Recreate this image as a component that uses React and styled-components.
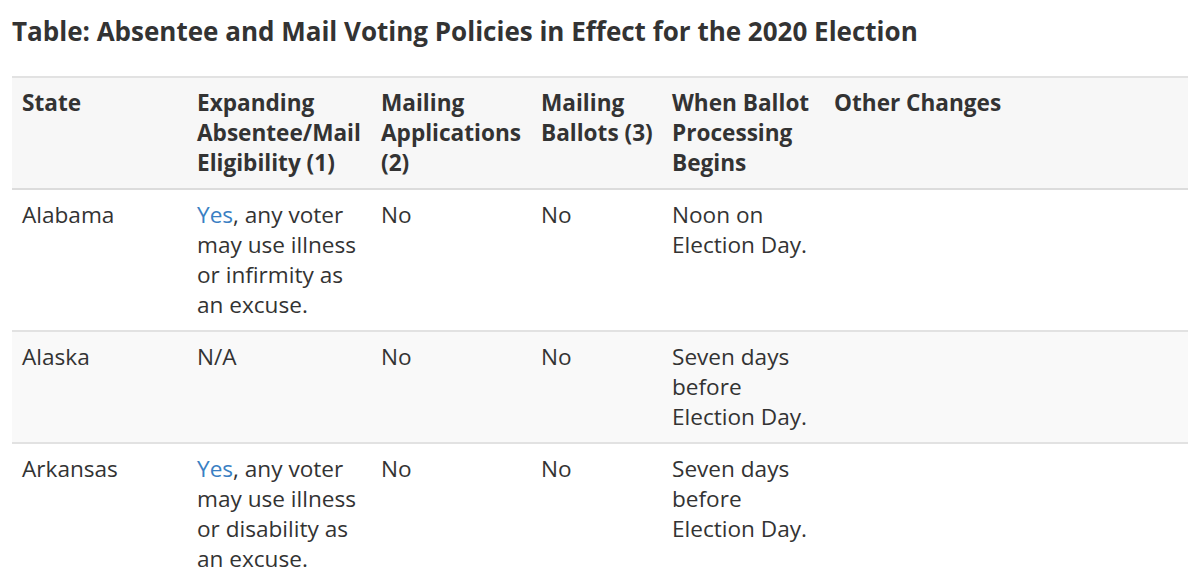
import React from "react";
import styled, { createGlobalStyle } from "styled-components";

const GlobalStyle = createGlobalStyle`
  html, body {
    margin: 0;
    padding: 0;
    background: #fff;
  }
  body {
    font-family: "Open Sans", "Liberation Sans", sans-serif;
    color: #333;
  }
`;

const Page = styled.div`
  padding: 14px 12px 0 12px;
  width: 1176px;
`;

const Title = styled.h2`
  font-size: 26px;
  font-weight: 700;
  line-height: 34px;
  margin: 0 0 28px 0;
  color: #333;
`;

const Table = styled.table`
  width: 1176px;
  border-collapse: collapse;
  table-layout: fixed;
  font-size: 22.6px;
  line-height: 30px;
`;

const HeadRow = styled.tr`
  background: #f7f7f7;
  border-top: 2px solid #e2e2e2;
  border-bottom: 2px solid #dcdcdc;
`;

const Row = styled.tr`
  background: ${(p) => (p.$striped ? "#f9f9f9" : "#fff")};
  border-bottom: 2px solid #e2e2e2;
`;

const Th = styled.th`
  box-sizing: border-box;
  text-align: left;
  vertical-align: top;
  font-weight: 700;
  padding: 10px 4px 10px 10px;
  width: ${(p) => p.$w}px;
  color: #333;
`;

const Td = styled.td`
  box-sizing: border-box;
  vertical-align: top;
  padding: 10px 6px 10px 10px;
  color: #333;
`;

const Link = styled.span`
  color: #3a7fc3;
`;

const cols = [
  { w: 175, label: "State" },
  { w: 184, label: "Expanding Absentee/Mail Eligibility (1)" },
  { w: 160, label: "Mailing Applications (2)" },
  { w: 131, label: "Mailing Ballots (3)" },
  { w: 162, label: "When Ballot Processing Begins" },
  { w: 364, label: "Other Changes" },
];

const rows = [
  {
    state: "Alabama",
    yes: true,
    elig: ", any voter may use illness or infirmity as an excuse.",
    apps: "No",
    ballots: "No",
    when: "Noon on Election Day.",
  },
  {
    state: "Alaska",
    elig: "N/A",
    apps: "No",
    ballots: "No",
    when: "Seven days before Election Day.",
  },
  {
    state: "Arkansas",
    yes: true,
    elig: ", any voter may use illness or disability as an excuse.",
    apps: "No",
    ballots: "No",
    when: "Seven days before Election Day.",
  },
];

export default function App() {
  return (
    <>
      <GlobalStyle />
      <Page>
        <Title>Table: Absentee and Mail Voting Policies in Effect for the 2020 Election</Title>
        <Table>
          <thead>
            <HeadRow>
              {cols.map((c) => (
                <Th key={c.label} $w={c.w}>
                  {c.label}
                </Th>
              ))}
            </HeadRow>
          </thead>
          <tbody>
            {rows.map((r, i) => (
              <Row key={r.state} $striped={i % 2 === 1}>
                <Td>{r.state}</Td>
                <Td>
                  {r.yes && <Link>Yes</Link>}
                  {r.elig}
                </Td>
                <Td>{r.apps}</Td>
                <Td>{r.ballots}</Td>
                <Td>{r.when}</Td>
                <Td></Td>
              </Row>
            ))}
          </tbody>
        </Table>
      </Page>
    </>
  );
}
